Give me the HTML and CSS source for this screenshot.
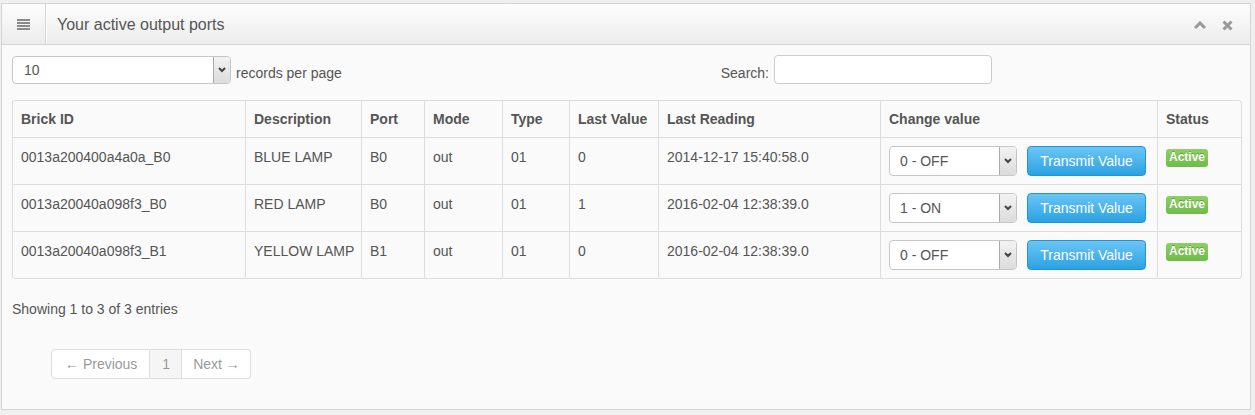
FILE: index.html
```html
<!DOCTYPE html>
<html lang="en">
<head>
  <meta charset="UTF-8" />
  <title>Your active output ports</title>
  <link rel="stylesheet" href="styles.css">
</head>
<body>
  <div class="widget-box">
    <div class="widget-title">
      <span class="icon">
        <svg width="13" height="11" viewBox="0 0 13 11"><g fill="#8a8a8a"><rect x="0" y="0" width="13" height="2"/><rect x="0" y="3" width="13" height="2"/><rect x="0" y="6" width="13" height="2"/><rect x="0" y="9" width="13" height="2"/></g></svg>
      </span>
      <h5>Your active output ports</h5>
      <div class="buttons">
        <svg width="12" height="8" viewBox="0 0 12 8"><path d="M1 7 L6 2 L11 7" fill="none" stroke="#999" stroke-width="3"/></svg>
        <svg width="11" height="11" viewBox="0 0 11 11"><path d="M1.5 1.5 L9.5 9.5 M9.5 1.5 L1.5 9.5" fill="none" stroke="#999" stroke-width="3"/></svg>
      </div>
    </div>

    <div class="widget-content">
      <div class="table-controls">
        <div class="length">
          <div class="select select-wide">
            <span>10</span>
            <span class="select-arrow"><svg width="8" height="6" viewBox="0 0 8 6"><path d="M1 1 L4 4 L7 1" fill="none" stroke="#444" stroke-width="2"/></svg></span>
          </div>
          <label>records per page</label>
        </div>
        <div class="filter">
          <label>Search:</label>
          <input type="text" class="search-input">
        </div>
      </div>

      <table class="table">
        <colgroup>
          <col style="width:233px"><col style="width:116px"><col style="width:63px">
          <col style="width:78px"><col style="width:67px"><col style="width:89px">
          <col style="width:222px"><col style="width:277px"><col style="width:84px">
        </colgroup>
        <thead>
          <tr>
            <th>Brick ID</th><th>Description</th><th>Port</th><th>Mode</th><th>Type</th>
            <th>Last Value</th><th>Last Reading</th><th>Change value</th><th>Status</th>
          </tr>
        </thead>
        <tbody>
          <tr>
            <td>0013a200400a4a0a_B0</td><td>BLUE LAMP</td><td>B0</td><td>out</td><td>01</td>
            <td>0</td><td>2014-12-17 15:40:58.0</td>
            <td>
              <div class="change">
                <div class="select"><span>0 - OFF</span><span class="select-arrow"><svg width="8" height="6" viewBox="0 0 8 6"><path d="M1 1 L4 4 L7 1" fill="none" stroke="#444" stroke-width="2"/></svg></span></div>
                <button class="btn-info">Transmit Value</button>
              </div>
            </td>
            <td><span class="label-success">Active</span></td>
          </tr>
          <tr>
            <td>0013a20040a098f3_B0</td><td>RED LAMP</td><td>B0</td><td>out</td><td>01</td>
            <td>1</td><td>2016-02-04 12:38:39.0</td>
            <td>
              <div class="change">
                <div class="select"><span>1 - ON</span><span class="select-arrow"><svg width="8" height="6" viewBox="0 0 8 6"><path d="M1 1 L4 4 L7 1" fill="none" stroke="#444" stroke-width="2"/></svg></span></div>
                <button class="btn-info">Transmit Value</button>
              </div>
            </td>
            <td><span class="label-success">Active</span></td>
          </tr>
          <tr>
            <td>0013a20040a098f3_B1</td><td>YELLOW LAMP</td><td>B1</td><td>out</td><td>01</td>
            <td>0</td><td>2016-02-04 12:38:39.0</td>
            <td>
              <div class="change">
                <div class="select"><span>0 - OFF</span><span class="select-arrow"><svg width="8" height="6" viewBox="0 0 8 6"><path d="M1 1 L4 4 L7 1" fill="none" stroke="#444" stroke-width="2"/></svg></span></div>
                <button class="btn-info">Transmit Value</button>
              </div>
            </td>
            <td><span class="label-success">Active</span></td>
          </tr>
        </tbody>
      </table>

      <div class="info">Showing 1 to 3 of 3 entries</div>

      <ul class="pagination">
        <li>&larr; Previous</li>
        <li class="active">1</li>
        <li>Next &rarr;</li>
      </ul>
    </div>
  </div>
</body>
</html>
```

FILE: styles.css
```css
body {
  margin: 0;
  padding: 3px 4px 0 1px;
  background: #efefef;
  font-family: 'Liberation Sans', Arial, sans-serif;
  font-size: 14px;
  line-height: 20px;
  color: #555;
}

.widget-box {
  background: #fafafa;
  border: 1px solid #d5d5d5;
  height: 407px;
  box-sizing: border-box;
}

.widget-title {
  height: 40px;
  display: flex;
  align-items: center;
  background: linear-gradient(#fdfdfd, #ececec);
  border-bottom: 1px solid #d5d5d5;
}

.widget-title .icon {
  width: 43px;
  height: 40px;
  display: flex;
  align-items: center;
  justify-content: center;
  border-right: 1px solid #d5d5d5;
  box-shadow: 1px 0 0 #fff;
}

.widget-title h5 {
  margin: 2px 0 0 11px;
  font-size: 16px;
  font-weight: normal;
  color: #555;
  flex: 1;
}

.widget-title .buttons {
  display: flex;
  align-items: center;
  gap: 16px;
  margin: 2px 17px 0 0;
}

.widget-content {
  padding: 10px;
}

.table-controls {
  display: flex;
  align-items: center;
  height: 29px;
  margin-bottom: 16px;
}

.length {
  display: flex;
  align-items: center;
  gap: 5px;
}

.length label {
  margin-top: 6px;
}

.filter {
  display: flex;
  align-items: center;
  gap: 5px;
  margin-left: auto;
  margin-right: 248px;
}

.filter label {
  margin-top: 7px;
}

.search-input {
  width: 218px;
  height: 29px;
  box-sizing: border-box;
  border: 1px solid #ccc;
  border-radius: 4px;
  background: #fff;
  margin: 0;
}

.select {
  width: 128px;
  height: 30px;
  box-sizing: border-box;
  display: flex;
  align-items: center;
  justify-content: space-between;
  background: #fff;
  border: 1px solid #c6c6c6;
  border-radius: 4px;
  padding-left: 10px;
  color: #555;
  overflow: hidden;
}

.select-wide {
  width: 219px;
  height: 28px;
  padding-left: 11px;
}

.select-arrow {
  width: 16px;
  align-self: stretch;
  display: flex;
  align-items: center;
  justify-content: center;
  background: linear-gradient(#f2f2f2, #dcdcdc);
  border-left: 1px solid #ababab;
}

.table {
  width: 1229px;
  table-layout: fixed;
  border-collapse: separate;
  border-spacing: 0;
  border: 1px solid #ddd;
  border-left: 0;
  border-radius: 4px;
}

.table th,
.table td {
  padding: 8px 8px;
  text-align: left;
  vertical-align: top;
  border-left: 1px solid #ddd;
  border-top: 1px solid #ddd;
  white-space: nowrap;
  overflow: hidden;
}

.table thead th {
  border-top: 0;
  font-weight: bold;
}

.table td {
  height: 30px;
}

.table td:nth-child(-n+7) {
  padding-top: 9px;
  padding-bottom: 7px;
}

.change {
  display: flex;
  gap: 10px;
}

.btn-info {
  width: 119px;
  height: 30px;
  margin: 0;
  padding: 0;
  font-family: inherit;
  font-size: 14px;
  color: #fff;
  background: linear-gradient(#6bc5f5, #2ba2e2);
  border: 1px solid #1f94d6;
  border-radius: 4px;
}

.label-success {
  display: inline-block;
  padding: 0 3px;
  height: 18px;
  line-height: 17px;
  font-size: 12px;
  font-weight: bold;
  color: #fff;
  text-shadow: 0 -1px 0 rgba(0, 0, 0, 0.25);
  background: linear-gradient(#8ed062, #6fbb4a);
  border-radius: 3px;
}

.info {
  margin-top: 20px;
}

.pagination {
  list-style: none;
  display: flex;
  margin: 30px 0 0 39px;
  padding: 0;
}

.pagination li {
  height: 28px;
  line-height: 28px;
  color: #999;
  background: #fff;
  border: 1px solid #ddd;
  border-left-width: 0;
}

.pagination li:first-child {
  border-left-width: 1px;
  border-radius: 4px 0 0 4px;
  padding: 0 12px 0 13px;
}

.pagination li:last-child {
  border-radius: 0 4px 4px 0;
  padding: 0 10px 0 11px;
}

.pagination .active {
  background: #f5f5f5;
  padding: 0 11px 0 12px;
}
```
